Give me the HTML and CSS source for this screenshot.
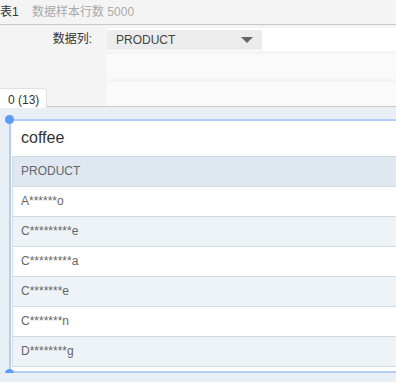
FILE: index.html
```html
<!DOCTYPE html>
<html lang="zh">
<head>
    <meta charset="UTF-8">
    <title>数据列</title>
    <link rel="stylesheet" href="styles.css">
</head>
<body>
    <div class="topbar">
        <span class="sheet">表1</span>
        <span class="rows-info">数据样本行数 5000</span>
    </div>

    <div class="config">
        <div class="labels">
            <div class="label">数据列:</div>
        </div>
        <div class="fields">
            <div class="field field-main">
                <div class="select">
                    <span>PRODUCT</span>
                    <span class="arrow"></span>
                </div>
            </div>
            <div class="field"></div>
            <div class="field field-last"></div>
        </div>
    </div>

    <div class="canvas">
        <div class="tab">0 (13)</div>
        <div class="frame">
            <span class="dot dot-top"></span>
            <span class="dot dot-bottom"></span>
            <div class="title">coffee</div>
            <div class="table">
                <div class="cell head">PRODUCT</div>
                <div class="cell">A******o</div>
                <div class="cell alt">C*********e</div>
                <div class="cell">C*********a</div>
                <div class="cell alt">C*******e</div>
                <div class="cell">C*******n</div>
                <div class="cell alt">D********g</div>
            </div>
        </div>
    </div>
</body>
</html>
```

FILE: styles.css
```css
body {
    margin: 0;
    font-family: "Liberation Sans", "Noto Sans CJK SC", sans-serif;
    font-size: 12px;
    background: #e9f0f5;
    overflow: hidden;
}

.topbar {
    height: 24px;
    line-height: 25px;
    background: #f4f4f4;
    border-bottom: 1px solid #c8c8c8;
    white-space: nowrap;
}
.sheet {
    color: #333;
}
.rows-info {
    color: #aaa;
    margin-left: 10px;
}

.config {
    display: flex;
    background: #f4f4f4;
    border-bottom: 1px solid #cacaca;
}
.labels {
    width: 107px;
    padding-top: 3px;
}
.label {
    height: 23px;
    line-height: 23px;
    text-align: right;
    padding-right: 15px;
    color: #333;
}
.fields {
    flex: 1;
    display: flex;
    flex-direction: column;
    gap: 3px;
    padding-top: 3px;
}
.field {
    height: 25px;
    background: #fafafa;
}
.field-main {
    height: 23px;
    background: #fff;
}
.field-last {
    height: 24px;
}
.select {
    width: 155px;
    height: 20px;
    margin-top: 2px;
    box-sizing: border-box;
    padding: 0 9px;
    background: #ececec;
    border-radius: 2px;
    display: flex;
    align-items: center;
    justify-content: space-between;
    color: #444;
}
.arrow {
    width: 0;
    height: 0;
    border-left: 6px solid transparent;
    border-right: 6px solid transparent;
    border-top: 6px solid #666;
}

.canvas {
    position: relative;
    padding-top: 12px;
    padding-left: 9px;
}
.tab {
    position: absolute;
    top: -19px;
    left: 0;
    width: 38px;
    height: 19px;
    line-height: 22px;
    padding-left: 8px;
    background: #fff;
    border: 1px solid #e0e0e0;
    border-left: none;
    border-bottom: none;
    border-top-right-radius: 3px;
    color: #333;
}

.frame {
    position: relative;
    border: 2px solid #b3cdf6;
    border-right: none;
    background: #fff;
    padding: 0 0 4px 1px;
}
.dot {
    position: absolute;
    left: -6px;
    width: 9px;
    height: 9px;
    border-radius: 50%;
    background: #5d9cf6;
}
.dot-top {
    top: -6px;
}
.dot-bottom {
    bottom: -7px;
}

.title {
    height: 35px;
    line-height: 34px;
    padding-left: 9px;
    font-size: 16px;
    color: #333;
}
.table {
    border-left: 1px solid #d5dde3;
}
.cell {
    height: 29px;
    line-height: 29px;
    padding-left: 8px;
    border-bottom: 1px solid #d2dbe2;
    color: #666;
}
.head {
    height: 29px;
    border-top: 1px solid #cfd9e0;
    background: #dfe8f1;
}
.alt {
    background: #eef3f7;
}
```
